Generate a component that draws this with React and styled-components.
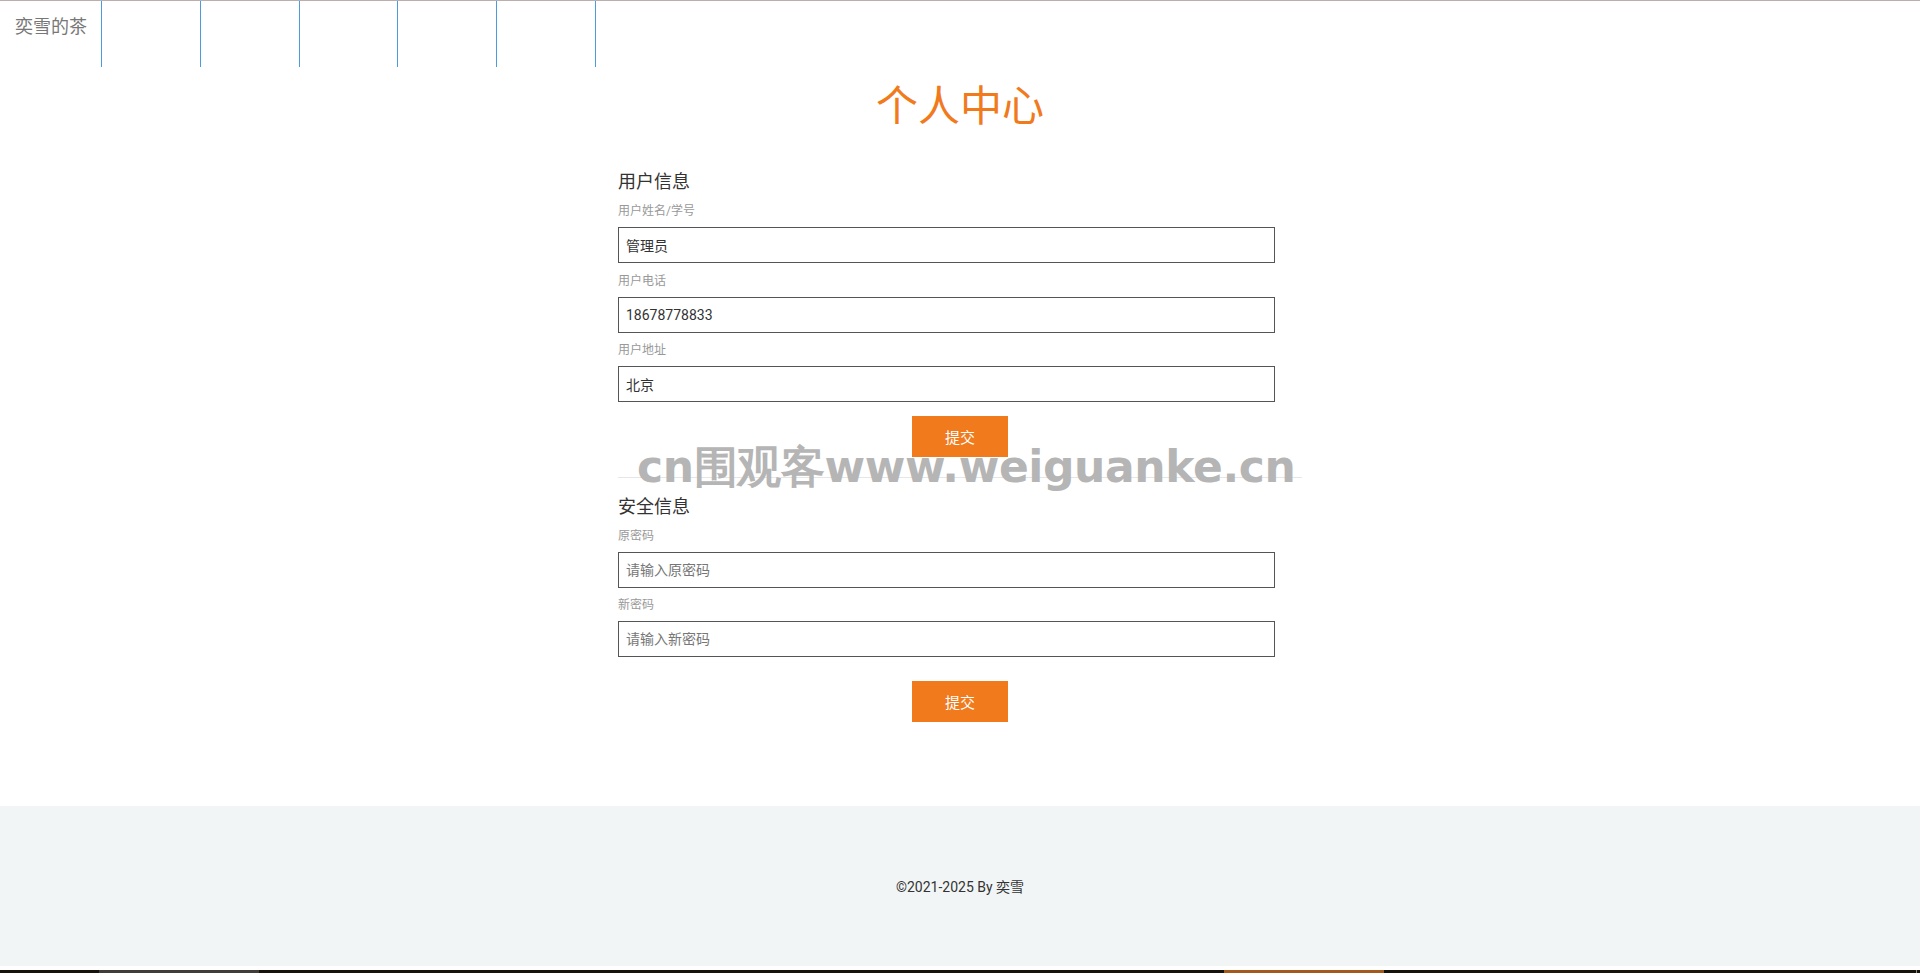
import React from "react";
import styled, { createGlobalStyle } from "styled-components";

const Global = createGlobalStyle`
  html, body { margin: 0; padding: 0; background: #fff; }
  body {
    font-family: Roboto, "Noto Sans CJK SC", "Noto Sans", sans-serif;
    color: #333;
  }
  * { box-sizing: border-box; }
`;

const Page = styled.div`
  position: relative;
  min-height: 973px;
  display: flex;
  flex-direction: column;
`;

const Header = styled.header`
  display: flex;
  height: 67px;
  border-top: 1px solid #bcaeae;
`;

const Brand = styled.div`
  width: 101px;
  padding: 14px 0 0 15px;
  font-size: 18px;
  line-height: 24px;
  color: #777;
  white-space: nowrap;
`;

const NavList = styled.ul`
  display: flex;
  margin: 0;
  padding: 0;
  list-style: none;
`;

const NavItem = styled.li`
  width: 98.8px;
  height: 100%;
  border-left: 1px solid #4a9be0;
  &:last-child {
    width: 99.8px;
    border-right: 1px solid #4a9be0;
  }
`;

const Title = styled.h1`
  margin: 15px 0 0;
  text-align: center;
  font-size: 42px;
  line-height: 50px;
  font-weight: 400;
  color: #f07a1c;
`;

const Container = styled.main`
  width: 684px;
  margin: 38px auto 0;
  display: flex;
  flex-direction: column;
`;

const Section = styled.section`
  display: flex;
  flex-direction: column;
  padding-bottom: ${(p) => (p.$divided ? "20px" : "0")};
  border-bottom: ${(p) => (p.$divided ? "1px solid #e6e6e6" : "none")};
  margin-bottom: ${(p) => (p.$divided ? "17px" : "0")};
`;

const SectionTitle = styled.h2`
  margin: 0 0 8px;
  font-size: 18px;
  line-height: 24px;
  font-weight: 400;
  color: #333;
`;

const Field = styled.div`
  margin-bottom: 8.5px;
`;

const Label = styled.label`
  display: block;
  font-size: 12px;
  line-height: 18px;
  color: #999;
  margin-bottom: 7px;
`;

const Input = styled.input`
  display: block;
  width: 96%;
  height: 36px;
  padding: 0 7px;
  border: 1px solid #555;
  border-radius: 0;
  outline: none;
  font-family: inherit;
  font-size: 14px;
  color: #333;
  background: #fff;
  &::placeholder { color: #777; }
`;

const ButtonRow = styled.div`
  display: flex;
  justify-content: center;
  margin-top: ${(p) => p.$gap}px;
`;

const Submit = styled.button`
  width: 96px;
  height: 41px;
  border: none;
  background: #f07a1c;
  color: #fff;
  font-family: inherit;
  font-size: 15px;
  cursor: pointer;
`;

const Footer = styled.footer`
  margin-top: 84px;
  height: 160px;
  background: #f2f5f6;
  display: flex;
  align-items: center;
  justify-content: center;
  font-size: 14px;
  color: #333;
`;

const TaskStrip = styled.div`
  margin-top: 4px;
  height: 3px;
  background: #17110a;
  display: flex;
`;

const StripSeg = styled.div`
  margin-left: ${(p) => p.$left}px;
  width: ${(p) => p.$w}px;
  background: ${(p) => p.$c};
`;

const Watermark = styled.div`
  position: absolute;
  left: 637px;
  top: 439px;
  font-family: "DejaVu Sans", sans-serif;
  font-weight: 700;
  font-size: 44px;
  line-height: 56px;
  letter-spacing: -0.4px;
  color: #b5b5b5;
  white-space: nowrap;
  pointer-events: none;
`;

export default function App() {
  return (
    <Page>
      <Global />
      <Header>
        <Brand>奕雪的茶</Brand>
        <NavList>
          {[0, 1, 2, 3, 4].map((i) => (
            <NavItem key={i} />
          ))}
        </NavList>
      </Header>

      <Title>个人中心</Title>

      <Container>
        <Section $divided>
          <SectionTitle>用户信息</SectionTitle>
          <Field>
            <Label>用户姓名/学号</Label>
            <Input defaultValue="管理员" />
          </Field>
          <Field>
            <Label>用户电话</Label>
            <Input defaultValue="18678778833" />
          </Field>
          <Field>
            <Label>用户地址</Label>
            <Input defaultValue="北京" />
          </Field>
          <ButtonRow $gap={5}>
            <Submit>提交</Submit>
          </ButtonRow>
        </Section>

        <Section>
          <SectionTitle>安全信息</SectionTitle>
          <Field>
            <Label>原密码</Label>
            <Input type="text" placeholder="请输入原密码" />
          </Field>
          <Field>
            <Label>新密码</Label>
            <Input type="text" placeholder="请输入新密码" />
          </Field>
          <ButtonRow $gap={15}>
            <Submit>提交</Submit>
          </ButtonRow>
        </Section>
      </Container>

      <Footer>©2021-2025 By 奕雪</Footer>

      <TaskStrip>
        <StripSeg $left={99} $w={160} $c="#423c38" />
        <StripSeg $left={965} $w={160} $c="#a3581c" />
        <StripSeg $left={532} $w={1} $c="#8a8a8a" />
      </TaskStrip>

      <Watermark>cn围观客www.weiguanke.cn</Watermark>
    </Page>
  );
}
